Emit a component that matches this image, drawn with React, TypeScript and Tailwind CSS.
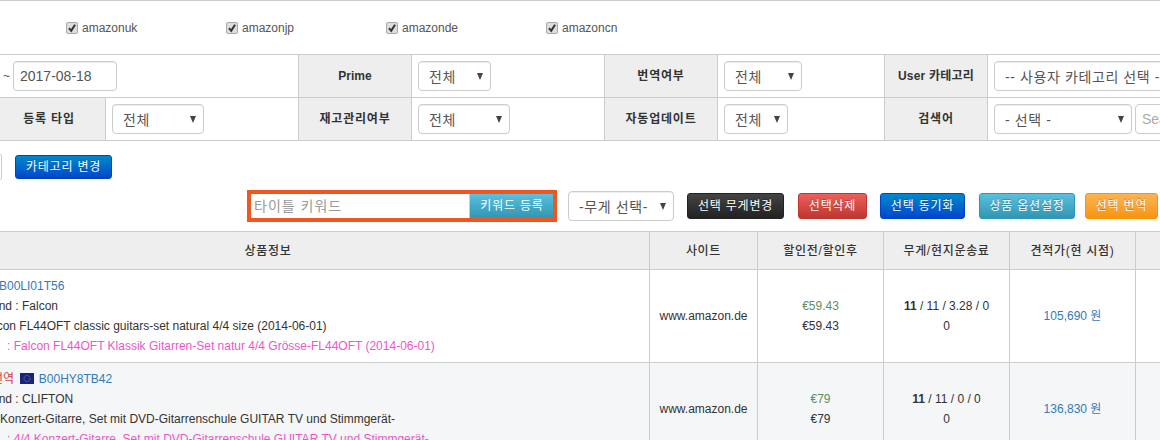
import React from 'react';

const Select: React.FC<{ text: string; className: string }> = ({ text, className }) => (
    <div className={`flex h-[30px] items-center justify-between overflow-hidden whitespace-nowrap rounded-[4px] border border-[#ccc] bg-white pl-[10px] pr-[7px] text-[14px] tracking-[0.6px] text-[#555] shadow-[inset_0_1px_1px_rgba(0,0,0,0.07)] ${className}`}>
        <span className="pt-[2px]">{text}</span>
        <svg width="6" height="7" viewBox="0 0 6 7" className="ml-2 shrink-0"><path d="M0 0h6L3 7z" fill="#444" /></svg>
    </div>
);

const Check: React.FC<{ label: string }> = ({ label }) => (
    <label className="flex w-[160px] items-center gap-[4px] text-[12px] text-[#555]">
        <span className="flex h-[12px] w-[12px] items-center justify-center rounded-[2px] border border-[#aaa] bg-[#ddd]">
            <svg width="10" height="10" viewBox="0 0 10 10"><path d="M2 5.2l2.2 2.6L8 1.8" fill="none" stroke="#333" strokeWidth="2" /></svg>
        </span>
        {label}
    </label>
);

const Label: React.FC<{ text: string; className?: string }> = ({ text, className = '' }) => (
    <div className={`flex items-center justify-center border-l border-[#ccc] bg-[#eee] text-[12px] font-bold text-[#333] ${className}`}>{text}</div>
);

const Value: React.FC<{ children: React.ReactNode; className?: string }> = ({ children, className = '' }) => (
    <div className={`flex items-center border-l border-[#ccc] bg-white pl-[6px] ${className}`}>{children}</div>
);

const ActionButton: React.FC<{ text: string; className: string }> = ({ text, className }) => (
    <button className={`flex h-[26px] items-center justify-center rounded-[3px] border text-[12px] tracking-[0.8px] text-white [text-shadow:0_-1px_0_rgba(0,0,0,0.25)] ${className}`}>{text}</button>
);

const th = 'h-[39px] border-r border-b border-t border-[#ccc] bg-[#eee] text-center text-[12px] font-medium tracking-[0.7px] text-[#333]';
const td = 'border-r border-b border-[#ccc] text-center align-middle';

const EuFlag = () => (
    <svg width="14" height="11" viewBox="0 0 14 11" className="inline-block align-[-1px]">
        <rect width="14" height="11" fill="#1a237e" />
        <circle cx="7" cy="5.5" r="3" fill="none" stroke="#c9b458" strokeWidth="0.7" strokeDasharray="1 1" />
    </svg>
);

const App: React.FC = () => {
    return (
        <div className="h-[440px] w-[1160px] overflow-hidden border-t border-[#ccc] bg-white font-['Liberation_Sans','Noto_Sans_CJK_KR',sans-serif] text-[12px] leading-[20px] text-[#333]">
            <div className="flex h-[53px] items-center pt-[1px] pl-[66px]">
                <Check label="amazonuk" />
                <Check label="amazonjp" />
                <Check label="amazonde" />
                <Check label="amazoncn" />
            </div>

            <div className="-ml-[7px] grid w-[1300px] grid-cols-[112px_193px_113px_193px_113px_167px_103px_306px] grid-rows-[43px_42px] border-b border-t border-[#ccc]">
                <div className="col-span-2 flex items-center border-b border-[#ccc] bg-white pl-[10px]">
                    <span className="mr-[4px] text-[12px] text-[#555]">~</span>
                    <div className="-ml-[1px] flex h-[30px] w-[104px] items-center rounded-[4px] border border-[#ccc] pl-[6px] text-[14px] text-[#555] shadow-[inset_0_1px_1px_rgba(0,0,0,0.07)]">2017-08-18</div>
                </div>
                <Label text="Prime" className="border-b" />
                <Value className="border-b"><Select text="전체" className="w-[73px]" /></Value>
                <Label text="번역여부" className="border-b tracking-[0.8px]" />
                <Value className="border-b"><Select text="전체" className="w-[78px]" /></Value>
                <Label text="User 카테고리" className="border-b tracking-[0.2px]" />
                <Value className="border-b"><Select text="-- 사용자 카테고리 선택 --" className="w-[230px]" /></Value>

                <Label text="등록 타입" className="border-l-0 tracking-[0.8px]" />
                <Value><Select text="전체" className="w-[92px]" /></Value>
                <Label text="재고관리여부" className="tracking-[0.8px]" />
                <Value><Select text="전체" className="w-[92px]" /></Value>
                <Label text="자동업데이트" className="tracking-[0.8px]" />
                <Value><Select text="전체" className="w-[64px]" /></Value>
                <Label text="검색어" className="tracking-[0.8px]" />
                <Value>
                    <Select text="- 선택 -" className="w-[138px]" />
                    <div className="ml-[3px] flex h-[30px] w-[120px] items-center rounded-[4px] border border-[#ccc] pl-[6px] text-[14px] text-[#aaa]">Search</div>
                </Value>
            </div>

            <div className="mt-[14px] flex h-[24px] items-center">
                <div className="h-[26px] w-[2px] rounded-r-[3px] border border-l-0 border-[#ccc] bg-white" />
                <ActionButton text="카테고리 변경" className="ml-[13px] !h-[24px] w-[97px] border-[#0544b0] bg-linear-to-b from-[#0088cc] to-[#0044cc]" />
            </div>

            <div className="mt-[11px] flex h-[32px] items-center pl-[247px]">
                <div className="flex h-[32px] w-[310px] items-center border-[4px] border-[#f0561d]">
                    <div className="flex h-[24px] w-[219px] items-center border-r border-[#ccc] bg-white pl-[3px] text-[14px] tracking-[1px] text-[#999]">타이틀 키워드</div>
                    <button className="flex h-[24px] flex-1 items-center justify-center bg-linear-to-b from-[#5bc0de] to-[#2f96b4] pl-[1px] text-[12px] tracking-[0.8px] text-white">키워드 등록</button>
                </div>
                <Select text="-무게 선택-" className="ml-[11px] w-[106px]" />
                <ActionButton text="선택 무게변경" className="ml-[13px] w-[97px] border-[#222] bg-linear-to-b from-[#444] to-[#222]" />
                <ActionButton text="선택삭제" className="ml-[14px] w-[69px] border-[#bd362f] bg-linear-to-b from-[#ee5f5b] to-[#bd362f]" />
                <ActionButton text="선택 동기화" className="ml-[13px] w-[85px] border-[#0044cc] bg-linear-to-b from-[#0088cc] to-[#0044cc]" />
                <ActionButton text="상품 옵션설정" className="ml-[14px] w-[96px] border-[#2f96b4] bg-linear-to-b from-[#5bc0de] to-[#2f96b4]" />
                <ActionButton text="선택 번역" className="ml-[10px] w-[73px] border-[#f89406] bg-linear-to-b from-[#fbb450] to-[#f89406]" />
            </div>

            <table className="mt-[9px] -ml-[113px] w-[1400px] table-fixed border-separate border-spacing-0">
                <colgroup>
                    <col className="w-[763px]" />
                    <col className="w-[108px]" />
                    <col className="w-[126px]" />
                    <col className="w-[126px]" />
                    <col className="w-[126px]" />
                    <col />
                </colgroup>
                <thead>
                    <tr>
                        <th className={th}>상품정보</th>
                        <th className={th}>사이트</th>
                        <th className={th}>할인전/할인후</th>
                        <th className={th}>무게/현지운송료</th>
                        <th className={th}>견적가(현 시점)</th>
                        <th className={th} />
                    </tr>
                </thead>
                <tbody>
                    <tr className="h-[93px]">
                        <td className={`${td} pl-[93px] text-left`}>
                            <div><span className="inline-block w-[19px]" /><span className="text-[#337ab7]">B00LI01T56</span></div>
                            <div>Brand : Falcon</div>
                            <div>Falcon FL44OFT classic guitars-set natural 4/4 size (2014-06-01)</div>
                            <div className="-ml-[2px] text-[#ee55cc]"><span className="mr-[7px]">번역</span>: Falcon FL44OFT Klassik Gitarren-Set natur 4/4 Grösse-FL44OFT (2014-06-01)</div>
                        </td>
                        <td className={td}>www.amazon.de</td>
                        <td className={td}>
                            <div className="text-[#5f8f5f]">€59.43</div>
                            <div>€59.43</div>
                        </td>
                        <td className={td}>
                            <div><b>11</b> / 11 / 3.28 / 0</div>
                            <div>0</div>
                        </td>
                        <td className={`${td} text-[#337ab7]`}>105,690 원</td>
                        <td className={td} />
                    </tr>
                    <tr className="h-[93px] bg-[#f5f6f8]">
                        <td className={`${td} pl-[93px] text-left`}>
                            <div><span className="inline-block w-[12px]" /><span className="text-[#c9403c]">번역</span> <span className="ml-[3px]"><EuFlag /></span> <span className="ml-[1px] text-[#337ab7]">B00HY8TB42</span></div>
                            <div>Brand : CLIFTON</div>
                            <div>4/4 Konzert-Gitarre, Set mit DVD-Gitarrenschule GUITAR TV und Stimmgerät-</div>
                            <div className="-ml-[2px] text-[#ee55cc]"><span className="mr-[7px]">번역</span>: 4/4 Konzert-Gitarre, Set mit DVD-Gitarrenschule GUITAR TV und Stimmgerät-</div>
                        </td>
                        <td className={td}>www.amazon.de</td>
                        <td className={td}>
                            <div className="text-[#5f8f5f]">€79</div>
                            <div>€79</div>
                        </td>
                        <td className={td}>
                            <div><b>11</b> / 11 / 0 / 0</div>
                            <div>0</div>
                        </td>
                        <td className={`${td} text-[#337ab7]`}>136,830 원</td>
                        <td className={td} />
                    </tr>
                </tbody>
            </table>
        </div>
    );
};

export default App;
